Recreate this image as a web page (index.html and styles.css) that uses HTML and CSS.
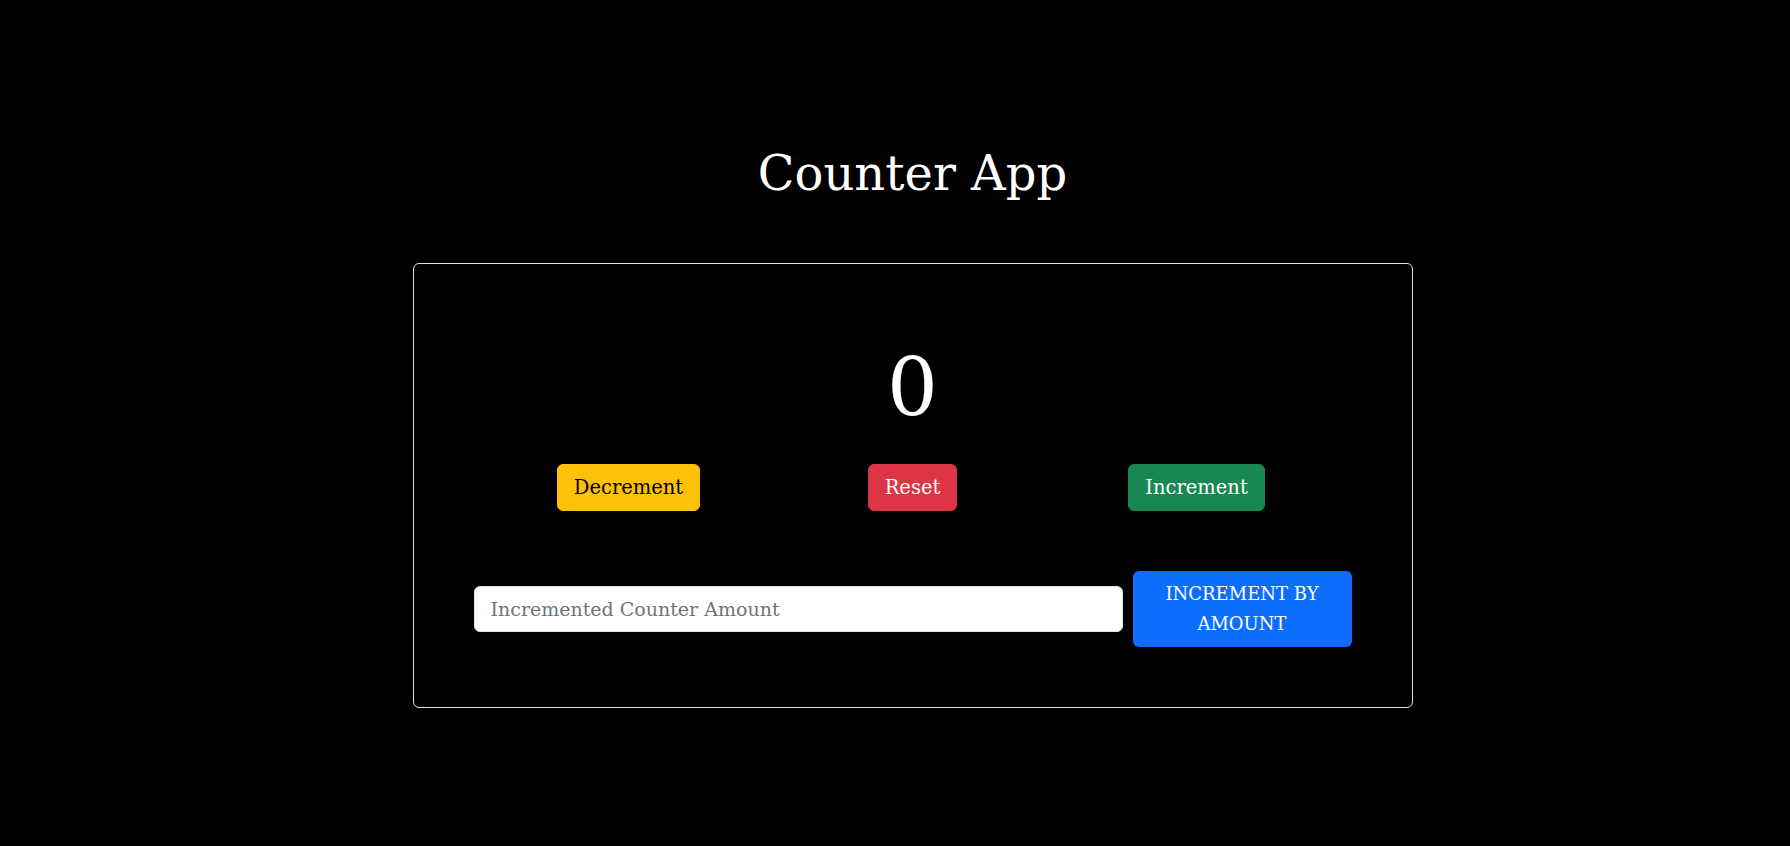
FILE: index.html
```html
<!DOCTYPE html>
<html lang="en">
<head>
<meta charset="utf-8">
<title>Counter App</title>
<link rel="stylesheet" href="styles.css">
</head>
<body>
<div class="app">
  <h1 class="title">Counter App</h1>
  <div class="card">
    <div class="count">0</div>
    <div class="actions">
      <div class="cell"><button class="btn btn-warning">Decrement</button></div>
      <div class="cell"><button class="btn btn-danger">Reset</button></div>
      <div class="cell"><button class="btn btn-success">Increment</button></div>
    </div>
    <div class="amount-row">
      <input class="amount-input" type="text" placeholder="Incremented Counter Amount">
      <button class="btn btn-primary">INCREMENT BY AMOUNT</button>
    </div>
  </div>
</div>
</body>
</html>
```

FILE: styles.css
```css
* { box-sizing: border-box; }

html, body {
  margin: 0;
  background: #000;
}

body {
  color: #fff;
  font-family: "DejaVu Serif", "Liberation Serif", serif;
}

.app {
  display: flex;
  flex-direction: column;
  align-items: center;
  padding: 145px 0 0 35px;
  min-height: 846px;
}

.title {
  margin: 0 0 60px;
  font-size: 48px;
  font-weight: 400;
  line-height: 57.6px;
}

.card {
  width: 1000px;
  border: 1px solid #dee2e6;
  border-radius: 6px;
  padding: 76px 0 60px;
}

.count {
  text-align: center;
  font-size: 80px;
  line-height: 96px;
}

.actions {
  width: 852px;
  margin: 28px auto 0;
  display: grid;
  grid-template-columns: repeat(3, 1fr);
  justify-items: center;
}

.btn {
  font-family: inherit;
  font-size: 19.5px;
  line-height: 29px;
  padding: 8px 16px;
  border: 1px solid transparent;
  border-radius: 6px;
  cursor: pointer;
}

.btn-warning { background: #ffc107; border-color: #ffc107; color: #000; }
.btn-danger { background: #dc3545; border-color: #dc3545; color: #fff; }
.btn-success { background: #198754; border-color: #198754; color: #fff; }

.amount-row {
  margin-top: 60px;
  padding: 0 60px;
  display: flex;
  align-items: center;
  gap: 10px;
}

.amount-input {
  flex: 1;
  height: 46px;
  padding: 0 16px;
  font-family: inherit;
  font-size: 19px;
  color: #212529;
  background: #fff;
  border: 1px solid #dee2e6;
  border-radius: 6px;
  outline: none;
}

.amount-input::placeholder { color: #6c757d; }

.btn-primary {
  width: 219px;
  background: #0d6efd;
  color: #fff;
  border: 0;
  font-size: 18px;
  line-height: 30px;
  padding: 8px 16px;
  text-align: center;
}
```
